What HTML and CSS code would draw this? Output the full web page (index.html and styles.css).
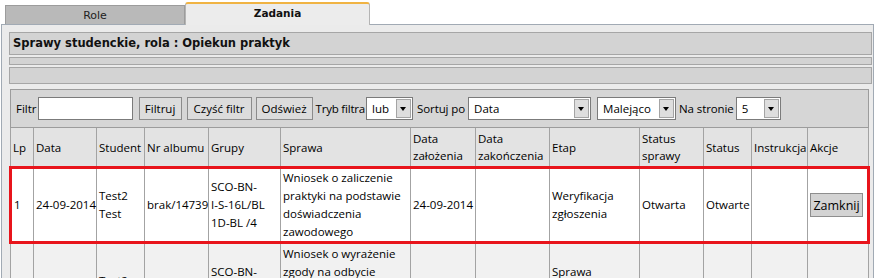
FILE: index.html
```html
<!DOCTYPE html>
<html lang="pl">
<head>
<meta charset="utf-8">
<title>Zadania</title>
<link rel="stylesheet" href="styles.css">
</head>
<body>
<div class="tabs">
  <div class="tab">Role</div>
  <div class="tab active">Zadania</div>
</div>
<div class="panel">
  <div class="title">Sprawy studenckie, rola : Opiekun praktyk</div>
  <div class="bar thin"></div>
  <div class="bar"></div>
  <table class="grid">
    <colgroup>
      <col class="c-lp"><col class="c-data"><col class="c-student"><col class="c-album"><col class="c-grupy"><col class="c-sprawa"><col class="c-zal"><col class="c-zak"><col class="c-etap"><col class="c-ss"><col class="c-status"><col class="c-instr"><col class="c-akcje">
    </colgroup>
    <thead>
      <tr class="filter-row">
        <td colspan="13">
          <div class="filters">
            <span class="lbl l-filtr">Filtr</span>
            <span class="input"></span>
            <button class="btn b-filtruj">Filtruj</button>
            <button class="btn b-czysc">Czyść filtr</button>
            <button class="btn b-odswiez">Odśwież</button>
            <span class="lbl l-tryb">Tryb filtra</span>
            <span class="select s-lub"><span class="val">lub</span><span class="arrow"></span></span>
            <span class="lbl l-sort">Sortuj po</span>
            <span class="select s-data"><span class="val">Data</span><span class="arrow"></span></span>
            <span class="select s-mal"><span class="val">Malejąco</span><span class="arrow"></span></span>
            <span class="lbl l-na">Na stronie</span>
            <span class="select s-5"><span class="val">5</span><span class="arrow"></span></span>
          </div>
        </td>
      </tr>
      <tr class="head-row">
        <th>Lp</th><th>Data</th><th>Student</th><th>Nr albumu</th><th>Grupy</th><th>Sprawa</th><th>Data<br>założenia</th><th>Data<br>zakończenia</th><th>Etap</th><th>Status<br>sprawy</th><th>Status</th><th>Instrukcja</th><th>Akcje</th>
      </tr>
    </thead>
    <tbody>
      <tr class="row sel">
        <td>1</td><td>24-09-2014</td><td>Test2<br>Test</td><td>brak/14739</td><td>SCO-BN-<br>I-S-16L/BL<br>1D-BL /4</td><td>Wniosek o zaliczenie<br>praktyki na podstawie<br>doświadczenia<br>zawodowego</td><td>24-09-2014</td><td></td><td>Weryfikacja<br>zgłoszenia</td><td>Otwarta</td><td>Otwarte</td><td></td><td><button class="btn act">Zamknij</button></td>
      </tr>
      <tr class="row alt">
        <td>2</td><td>24-09-2014</td><td>Test2<br>Test</td><td>brak/14739</td><td>SCO-BN-<br>I-S-16L/BL<br>1D-BL /4</td><td>Wniosek o wyrażenie<br>zgody na odbycie<br>praktyki w innym<br>terminie niż<br>przewidziany</td><td>24-09-2014</td><td></td><td>Sprawa<br>przekazana do<br>dziekanatu</td><td>Otwarta</td><td>Otwarte</td><td></td><td><button class="btn act">Zamknij</button></td>
      </tr>
    </tbody>
  </table>
</div>
</body>
</html>
```
FILE: styles.css
```css
html, body {
  margin: 0;
  padding: 0;
  background: #ffffff;
  overflow: hidden;
}
body {
  font-family: "Open Sans", "Noto Sans", sans-serif;
  font-size: 11.5px;
  color: #000;
  width: 875px;
  height: 278px;
}

/* Tabs */
.tabs {
  display: flex;
  align-items: flex-end;
  height: 24px;
  padding-left: 5px;
  position: relative;
  z-index: 2;
}
.tab {
  box-sizing: border-box;
  width: 180px;
  height: 19px;
  border: 1px solid #9c9c9c;
  border-bottom: none;
  background: #b9b9b9;
  text-align: center;
  font-family: "DejaVu Sans", Verdana, sans-serif;
  font-size: 11px;
  line-height: 19px;
  color: #222;
}
.tab.active {
  width: 185px;
  height: 23px;
  margin-bottom: -1px;
  border: 1px solid #b4b4b4;
  border-top: 2px solid #f0b343;
  border-bottom: none;
  border-radius: 3px 3px 0 0;
  background: #ececec;
  font-weight: bold;
  font-size: 10.5px;
  line-height: 18px;
  color: #111;
}

/* Panel */
.panel {
  box-sizing: border-box;
  margin: 0 1px;
  height: 260px;
  border: 1px solid #a1aab4;
  background: #ebebeb;
  padding: 7px 1px 0 7px;
}
.title {
  box-sizing: border-box;
  height: 23px;
  border: 1px solid #a6a6a6;
  background: #d3d3d3;
  padding-left: 3px;
  font-family: "DejaVu Sans", Verdana, sans-serif;
  font-weight: bold;
  font-size: 11.5px;
  line-height: 20px;
  color: #111;
}
.bar {
  box-sizing: border-box;
  height: 17px;
  margin-top: 2px;
  border: 1px solid #a6a6a6;
  background: #d3d3d3;
}
.bar.thin {
  height: 8px;
}

/* Grid */
.grid {
  margin-top: 5px;
  width: 858px;
  table-layout: fixed;
  border-collapse: collapse;
  border: 1px solid #9c9c9c;
}
.c-lp { width: 23px; }
.c-data { width: 63px; }
.c-student { width: 48px; }
.c-album { width: 64px; }
.c-grupy { width: 72px; }
.c-sprawa { width: 130px; }
.c-zal { width: 65px; }
.c-zak { width: 74px; }
.c-etap { width: 90px; }
.c-ss { width: 64px; }
.c-status { width: 48px; }
.c-instr { width: 56px; }
.c-akcje { width: 61px; }

.filter-row td {
  height: 37px;
  padding: 0;
  background: #d6d6d6;
  border: 1px solid #9c9c9c;
}
.filters {
  display: flex;
  align-items: center;
  padding-left: 5px;
  white-space: nowrap;
}
.lbl {
  line-height: 23px;
}
.input {
  box-sizing: border-box;
  width: 95px;
  height: 23px;
  margin-left: 1px;
  border: 1px solid #7b7b7b;
  background: #fff;
}
.btn {
  box-sizing: border-box;
  height: 23px;
  padding: 0;
  border: 1px solid #8b8b8b;
  background: #dcdcdc;
  font-family: inherit;
  font-size: 11.5px;
  color: #000;
  text-align: center;
}
.b-filtruj { width: 43px; margin-left: 6px; }
.b-czysc { width: 65px; margin-left: 5px; }
.b-odswiez { width: 57px; margin-left: 4px; }
.l-tryb { margin-left: 3px; letter-spacing: -0.2px; }
.l-sort { margin-left: 4px; letter-spacing: -0.1px; }
.l-na { margin-left: 3px; letter-spacing: -0.1px; }

.select {
  box-sizing: border-box;
  display: flex;
  height: 23px;
  border: 1px solid #7b7b7b;
  background: #fff;
}
.select .val {
  flex: 1;
  padding-left: 5px;
  line-height: 21px;
}
.select .arrow {
  position: relative;
  box-sizing: border-box;
  width: 15px;
  margin: 1px;
  border: 1px solid #a4a4a4;
  background: #dedede;
}
.select .arrow::after {
  content: "";
  position: absolute;
  left: 3px;
  top: 7px;
  border-left: 3.5px solid transparent;
  border-right: 3.5px solid transparent;
  border-top: 4px solid #000;
}
.s-lub { width: 47px; margin-left: 1px; }
.s-data { width: 123px; margin-left: 3px; }
.s-mal { width: 79px; margin-left: 6px; }
.s-5 { width: 45px; margin-left: 2px; }

.head-row th {
  height: 38px;
  padding: 0 2px;
  background: #e3e3e3;
  border: 1px solid #a3a3a3;
  font-weight: normal;
  text-align: left;
  vertical-align: middle;
  line-height: 17px;
  white-space: nowrap;
}
.row td {
  padding: 0 2px;
  border: 1px solid #a3a3a3;
  vertical-align: middle;
  line-height: 18px;
  white-space: nowrap;
  background: #fff;
}
.row.sel td {
  height: 69px;
  border-top: 3px solid #e8141b;
  border-bottom: 3px solid #e8141b;
}
.row.sel td:first-child { border-left: 3px solid #e8141b; }
.row.sel td:last-child { border-right: 3px solid #e8141b; }
.row.alt td {
  background: #f1f1f1;
  height: 92px;
}
.btn.act {
  width: 53px;
  height: 24px;
  background: #d3d3d3;
  border: 1px solid #8e8e8e;
  font-size: 12.5px;
}
```
